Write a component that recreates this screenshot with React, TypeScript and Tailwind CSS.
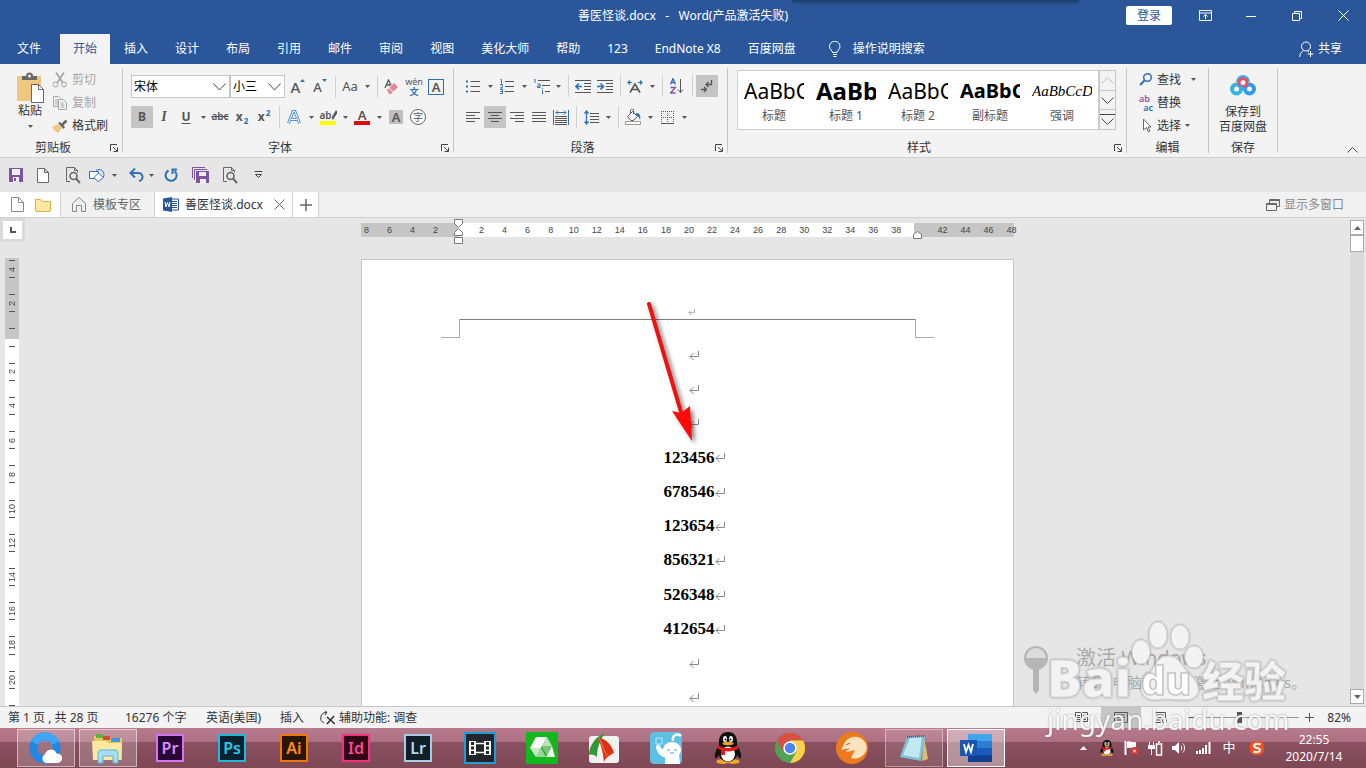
import type { ReactNode } from 'react';
import { clsx } from 'clsx';

interface IconProps {
  w?: number;
  h?: number;
  box?: string;
  className?: string;
  children: ReactNode;
}

function Icon({ w = 16, h = 16, box, className, children }: IconProps) {
  return (
    <svg
      width={w}
      height={h}
      viewBox={box ?? `0 0 ${w} ${h}`}
      fill="none"
      stroke="currentColor"
      className={clsx('shrink-0', className)}
      aria-hidden="true"
    >
      {children}
    </svg>
  );
}

function Caret() {
  return (
    <Icon w={5} h={3}>
      <path d="M0 0h5L2.5 3z" fill="#555" stroke="none" />
    </Icon>
  );
}

function CaretButton({ label }: { label: string }) {
  return (
    <button type="button" aria-label={label} className="flex h-[22px] w-3 items-center justify-center">
      <Caret />
    </button>
  );
}

interface ToolButtonProps {
  label: string;
  active?: boolean;
  children: ReactNode;
}

function ToolButton({ label, active, children }: ToolButtonProps) {
  return (
    <button
      type="button"
      aria-label={label}
      className={clsx('flex h-[22px] w-[22px] shrink-0 items-center justify-center text-[#555]', active && 'bg-[#c5c5c5]')}
    >
      {children}
    </button>
  );
}

function Separator() {
  return (
    <div className="flex h-[22px] w-2 justify-center">
      <div className="w-px bg-[#d0d0d0]" />
    </div>
  );
}

interface GroupProps {
  label: string;
  width: string;
  launcher?: boolean;
  children: ReactNode;
}

function Group({ label, width, launcher, children }: GroupProps) {
  return (
    <section className={clsx('my-1 flex shrink-0 flex-col border-r border-[#c6c6c6]', width)}>
      <div className="min-h-0 flex-1">{children}</div>
      <div className="flex h-2.5 items-center px-1">
        <span className="flex-1 text-center">{label}</span>
        {launcher && (
          <button type="button" aria-label={`${label}设置`} className="ml-2">
            <Icon w={8} h={8} className="text-[#444]">
              <path d="M.5 7V.5H7M3 3l4 4M7.500 3.500v4h-4" />
            </Icon>
          </button>
        )}
      </div>
    </section>
  );
}

function TitleBar() {
  return (
    <header className="relative grid h-[31px] shrink-0 grid-cols-[1fr_auto_1fr] items-center text-white">
      <div className="absolute top-0 left-[58%] h-0.5 w-[21%] rounded-b bg-[#1f3f70] shadow-[0_1px_3px_#1f3f70]" />
      <span />
      <h1 className="whitespace-pre">{'善医怪谈.docx   -   Word(产品激活失败)'}</h1>
      <div className="flex items-center justify-end">
        <button type="button" className="mr-2.5 h-[19px] w-[46px] rounded-xs bg-white text-[#2b579a]">登录</button>
        <button type="button" aria-label="功能区显示选项" className="flex w-[46px] justify-center">
          <Icon w={13} h={11}>
            <path d="M.5 .5h12v10H.5zM.5 3h12M6.500 9V4.500M4.500 6.500l2-2 2 2" />
          </Icon>
        </button>
        <button type="button" aria-label="最小化" className="flex w-[46px] justify-center">
          <Icon w={10} h={10}>
            <path d="M0 5.500h10" />
          </Icon>
        </button>
        <button type="button" aria-label="还原" className="flex w-[46px] justify-center">
          <Icon w={10} h={10}>
            <path d="M.5 2.500h7v7h-7zM2.500 2.500v-2h7v7h-2" />
          </Icon>
        </button>
        <button type="button" aria-label="关闭" className="flex w-[46px] justify-center">
          <Icon w={11} h={11}>
            <path d="M.5 .5l10 10M10.500 .5l-10 10" />
          </Icon>
        </button>
      </div>
    </header>
  );
}

const ribbonTabs = ['开始', '插入', '设计', '布局', '引用', '邮件', '审阅', '视图', '美化大师', '帮助', '123', 'EndNote X8', '百度网盘'];

function RibbonTabs() {
  return (
    <nav className="flex h-[33px] shrink-0 items-end pl-1 text-white">
      <button type="button" className="mr-1.5 h-[30px] px-[13px]">文件</button>
      <div className="flex gap-px">
        {ribbonTabs.map((tab, i) => (
          <button key={tab} type="button" className={clsx('h-[30px] px-[13px]', i === 0 && 'bg-[#f3f3f3] text-[#2b579a]')}>
            {tab}
          </button>
        ))}
      </div>
      <button type="button" className="ml-5 flex h-[30px] items-center gap-3">
        <Icon w={12} h={16}>
          <path d="M3.500 11.500c0-2-3-3-3-6a5 5 0 0 1 10.500 0c0 3-3 4-3 6zM4 13.500h4M4.500 15.500h3" />
        </Icon>
        操作说明搜索
      </button>
      <button type="button" className="mr-6 ml-auto flex h-[30px] items-center gap-1">
        <Icon w={15} h={17}>
          <circle cx="7" cy="5.500" r="4.500" />
          <path d="M4.500 9.500C2 11 1 13 .5 16M8.500 10l1.500 1M11.500 10v6M8.500 13h6" />
        </Icon>
        共享
      </button>
    </nav>
  );
}

function ClipboardGroup() {
  return (
    <Group label="剪贴板" width="w-[123px]" launcher>
      <div className="flex gap-2 pl-4">
        <button type="button" className="flex w-[28px] flex-col items-center pt-1">
          <Icon w={28} h={31}>
            <path d="M1 4h24v25H1z" fill="#edc87e" stroke="none" />
            <path d="M6 8V4h4a3.500 3.500 0 0 1 7 0h4v4z" fill="#6a6a6a" stroke="none" />
            <circle cx="13.500" cy="4" r="1.500" fill="#f3f3f3" stroke="none" />
            <path d="M15.500 12.500h7l5 5v13h-12z" fill="#fff" stroke="#666" />
            <path d="M22.500 12.500v5h5" stroke="#666" />
          </Icon>
          <span className="leading-4 whitespace-nowrap">粘贴</span>
          <span className="mt-1.5">
            <Caret />
          </span>
        </button>
        <div className="flex flex-col text-[#a6a6a6]">
          <button type="button" className="flex h-[23px] items-center gap-1">
            <Icon w={16} h={16}>
              <path d="M4 .5l7 10.500M12 .5L5 11" strokeWidth="1.800" />
              <circle cx="3.500" cy="12.500" r="2.500" />
              <circle cx="12" cy="12.500" r="2.500" />
            </Icon>
            剪切
          </button>
          <button type="button" className="flex h-[23px] items-center gap-1">
            <Icon w={16} h={14}>
              <path d="M6 10.500H1.500V.5h5l2 2v1M3 4h3M3 6h3M3 8h3" />
              <path d="M6.500 3.500h5l3 3v7h-8zM8.500 7h3M8.500 9h4M8.500 11h4" />
            </Icon>
            复制
          </button>
          <button type="button" className="flex h-[23px] items-center gap-1 text-[#333]">
            <Icon w={16} h={14}>
              <path d="M0 8l6-3 4 4-4 5c-2-1-4-3-6-6z" fill="#edc87e" stroke="none" />
              <path d="M6 4l2-1 5 5-1.500 2z" fill="#666" stroke="none" />
              <path d="M10 6l4.500-4.500" stroke="#666" strokeWidth="2.500" />
            </Icon>
            格式刷
          </button>
        </div>
      </div>
    </Group>
  );
}

interface PickerProps {
  label: string;
  value: string;
  width: string;
}

function Picker({ label, value, width }: PickerProps) {
  return (
    <div className={clsx('relative', width)}>
      <select aria-label={label} className="h-[23px] w-full appearance-none border border-[#c6c6c6] bg-white pl-0.5 text-xs text-black">
        <option>{value}</option>
      </select>
      <Icon w={13} h={8} className="pointer-events-none absolute top-2 right-1 text-[#444]">
        <path d="M.5 .5l6 6.500 6-6.500" />
      </Icon>
    </div>
  );
}

function FontGroup() {
  return (
    <Group label="字体" width="w-[331px]" launcher>
      <div className="flex flex-col gap-2 pt-[7px] pl-2">
        <div className="flex h-[23px] items-center">
          <Picker label="字体" value="宋体" width="w-[99px]" />
          <Picker label="字号" value="小三" width="w-[55px]" />
          <div className="ml-0.5 flex">
            <ToolButton label="增大字号">
              <span className="text-[15px] leading-4 font-medium">A</span>
              <Icon w={5} h={3} className="mb-3">
                <path d="M0 3h5L2.500 0z" fill="#2f6fb5" stroke="none" />
              </Icon>
            </ToolButton>
            <ToolButton label="减小字号">
              <span className="text-[13px] leading-4 font-medium">A</span>
              <Icon w={5} h={3} className="mb-3">
                <path d="M0 0h5L2.500 3z" fill="#2f6fb5" stroke="none" />
              </Icon>
            </ToolButton>
            <Separator />
            <ToolButton label="更改大小写">
              <span className="text-[13px]">Aa</span>
            </ToolButton>
            <CaretButton label="大小写选项" />
            <Separator />
            <ToolButton label="清除所有格式">
              <Icon w={16} h={16}>
                <path d="M1 9L4.500 1 7 6M2.500 6h4" strokeWidth="1.300" />
                <path d="M3 11l7-7 4 4-7 7H5z" fill="#e8879a" stroke="none" />
                <path d="M5 9l4 4" stroke="#fff" />
              </Icon>
            </ToolButton>
            <ToolButton label="拼音指南">
              <span className="flex flex-col items-center">
                <span className="text-[9px] leading-[10px]">wén</span>
                <span className="text-[9px] leading-[10px] font-bold text-[#2f6fb5]">文</span>
              </span>
            </ToolButton>
            <ToolButton label="字符边框">
              <span className="h-4 w-4 border border-[#2f6fb5] text-[13px] leading-[14px] font-semibold">A</span>
            </ToolButton>
          </div>
        </div>
        <div className="flex">
          <ToolButton label="加粗" active>
            <b>B</b>
          </ToolButton>
          <ToolButton label="倾斜">
            <i className="font-['Liberation_Serif',serif] text-sm font-bold">I</i>
          </ToolButton>
          <ToolButton label="下划线">
            <span className="font-bold underline underline-offset-2">U</span>
          </ToolButton>
          <CaretButton label="下划线选项" />
          <ToolButton label="删除线">
            <span className="text-[10px] font-semibold line-through">abc</span>
          </ToolButton>
          <ToolButton label="下标">
            <b>x</b>
            <span className="mt-2 ml-px text-[8px] font-bold text-[#2f6fb5]">2</span>
          </ToolButton>
          <ToolButton label="上标">
            <b>x</b>
            <span className="mb-2 ml-px text-[8px] font-bold text-[#2f6fb5]">2</span>
          </ToolButton>
          <Separator />
          <ToolButton label="文本效果和版式">
            <Icon w={14} h={15}>
              <path d="M1.500 13.500L6 1.500h2l4.500 12M4 9.500h6" stroke="#5b94d6" strokeWidth="3" />
              <path d="M1.500 13.500L6 1.500h2l4.500 12M4 9.500h6" stroke="#fff" />
            </Icon>
          </ToolButton>
          <CaretButton label="文本效果选项" />
          <ToolButton label="文本突出显示颜色">
            <span className="flex flex-col items-center">
              <span className="flex items-center">
                <span className="text-[10px] leading-[11px] font-semibold">ab</span>
                <Icon w={5} h={11}>
                  <path d="M5 1L0 9" strokeWidth="2.500" />
                </Icon>
              </span>
              <span className="h-1 w-4 bg-[#ffff00]" />
            </span>
          </ToolButton>
          <CaretButton label="突出显示选项" />
          <ToolButton label="字体颜色">
            <span className="flex flex-col items-center">
              <span className="text-[13px] leading-3 font-semibold">A</span>
              <span className="h-1 w-4 bg-[#e00b0b]" />
            </span>
          </ToolButton>
          <CaretButton label="字体颜色选项" />
          <ToolButton label="字符底纹">
            <span className="h-3.5 w-3.5 bg-[#c0c0c0] text-[13px] leading-[14px] font-semibold">A</span>
          </ToolButton>
          <ToolButton label="带圈字符">
            <span className="h-4 w-4 rounded-full border border-[#666] bg-white text-[10px] leading-[14px]">字</span>
          </ToolButton>
        </div>
      </div>
    </Group>
  );
}

function ParagraphGroup() {
  return (
    <Group label="段落" width="w-[274px]" launcher>
      <div className="flex flex-col gap-[9px] pt-[7px] pl-2">
        <div className="flex">
          <ToolButton label="项目符号">
            <Icon w={14} h={15}>
              <path d="M4.500 2.500H14M4.500 7.500H14M4.500 12.500H14" />
              <path d="M0 2.500h2M0 7.500h2M0 12.500h2" stroke="#2f6fb5" strokeWidth="2" />
            </Icon>
          </ToolButton>
          <CaretButton label="项目符号选项" />
          <ToolButton label="编号">
            <Icon w={14} h={15}>
              <path d="M5 2.500h9M5 7.500h9M5 12.500h9" />
              <path d="M.5 .5h1v4M0 5.500h2.500v1.500l-2 2h2.500M0 10.500h2.500v4H0M.5 12.500h2" stroke="#2f6fb5" />
            </Icon>
          </ToolButton>
          <CaretButton label="编号选项" />
          <ToolButton label="多级列表">
            <Icon w={17} h={15}>
              <path d="M5 1.500h12M9 6.500h8M12 12.500h5" />
              <path d="M1 0h1v4M4.500 5h2.500v3.500H4.500V7H7M9.500 11v4M9.500 9v1" stroke="#2f6fb5" />
            </Icon>
          </ToolButton>
          <CaretButton label="多级列表选项" />
          <Separator />
          <ToolButton label="减少缩进量">
            <Icon w={16} h={13}>
              <path d="M0 .5h16M9 3.500h7M9 6.500h7M9 9.500h7M0 12.500h16" />
              <path d="M7 6.500H1.500M4 3.500l-3 3 3 3" stroke="#2f6fb5" strokeWidth="1.600" />
            </Icon>
          </ToolButton>
          <ToolButton label="增加缩进量">
            <Icon w={16} h={13}>
              <path d="M0 .5h16M9 3.500h7M9 6.500h7M9 9.500h7M0 12.500h16" />
              <path d="M0 6.500h6M3.500 3.500l3 3-3 3" stroke="#2f6fb5" strokeWidth="1.600" />
            </Icon>
          </ToolButton>
          <Separator />
          <ToolButton label="中文版式">
            <Icon w={16} h={13}>
              <path d="M3 12.500L8 4l5 8.500M5 9.500h6" strokeWidth="1.600" />
              <path d="M5 2.500H.5M3 .5l-2 2 2 2M11 2.500h4.500M13 .5l2 2-2 2" stroke="#2f6fb5" strokeWidth="1.200" />
            </Icon>
          </ToolButton>
          <CaretButton label="中文版式选项" />
          <Separator />
          <ToolButton label="排序">
            <Icon w={14} h={16}>
              <path d="M.5 6.500L3 .5l2.500 6M1.500 4.500h3" stroke="#2f6fb5" strokeWidth="1.300" />
              <path d="M.5 9.500h5l-5 5.500h5" stroke="#8a52a0" strokeWidth="1.300" />
              <path d="M10.500 1v13M8 11.500l2.500 3 2.500-3" />
            </Icon>
          </ToolButton>
          <Separator />
          <ToolButton label="显示编辑标记" active>
            <Icon w={12} h={13}>
              <path d="M10.500 0v4.500H5M7.500 2L5 4.500 7.500 7M0 9.500h5M3 7l2.500 2.500L3 12" strokeWidth="1.300" />
            </Icon>
          </ToolButton>
        </div>
        <div className="flex">
          <ToolButton label="左对齐">
            <Icon w={14} h={11}>
              <path d="M0 .5h14M0 3.500h9M0 6.500h14M0 9.500h9" />
            </Icon>
          </ToolButton>
          <ToolButton label="居中" active>
            <Icon w={14} h={11}>
              <path d="M0 .5h14M3 3.500h8M0 6.500h14M3 9.500h8" />
            </Icon>
          </ToolButton>
          <ToolButton label="右对齐">
            <Icon w={14} h={11}>
              <path d="M0 .5h14M5 3.500h9M0 6.500h14M5 9.500h9" />
            </Icon>
          </ToolButton>
          <ToolButton label="两端对齐">
            <Icon w={14} h={11}>
              <path d="M0 .5h14M0 3.500h14M0 6.500h14M0 9.500h14" />
            </Icon>
          </ToolButton>
          <ToolButton label="分散对齐">
            <Icon w={16} h={15}>
              <path d="M2 6.500h12M2 8.500h12M2 10.500h12M2 12.500h12M2 14.500h12" />
              <path d="M.5 0v15M15.500 0v15M3 2.500h10M5 .5l-2 2 2 2M11 .5l2 2-2 2" stroke="#2f6fb5" />
            </Icon>
          </ToolButton>
          <Separator />
          <ToolButton label="行和段落间距">
            <Icon w={15} h={15}>
              <path d="M6 3.500h9M6 6.500h9M6 9.500h9M6 12.500h9" />
              <path d="M2.500 1v13M.5 3.500l2-2.500 2 2.500M.5 11.500l2 2.500 2-2.500" stroke="#2f6fb5" strokeWidth="1.300" />
            </Icon>
          </ToolButton>
          <CaretButton label="间距选项" />
          <Separator />
          <ToolButton label="底纹">
            <Icon w={17} h={16}>
              <path d="M2.500 7.500l5-5 5 5-4.500 4H6zM5.500 5V1.500a1.500 1.500 0 0 1 3 0V5" fill="#fff" />
              <path d="M11 4c4 0 5 3 4 7-1-3-2-4-4-5z" fill="#2f6fb5" stroke="none" />
              <path d="M.5 12.500h15v3H.5z" fill="#fff" stroke="#999" />
            </Icon>
          </ToolButton>
          <CaretButton label="底纹选项" />
          <ToolButton label="边框">
            <Icon w={13} h={13}>
              <path d="M.5 0v12M6.500 0v12M12.500 0v12M0 .5h13M0 6.500h13" strokeDasharray="1 1" />
              <path d="M0 12.500h13" />
            </Icon>
          </ToolButton>
          <CaretButton label="边框选项" />
        </div>
      </div>
    </Group>
  );
}

const styleItems = [
  { name: '标题', sample: 'AaBbC', look: 'text-[21px]' },
  { name: '标题 1', sample: 'AaBb', look: 'text-2xl font-bold' },
  { name: '标题 2', sample: 'AaBbC', look: 'text-[21px]' },
  { name: '副标题', sample: 'AaBbC', look: 'text-xl font-bold' },
  { name: '强调', sample: 'AaBbCcDd', look: "text-[15px] italic font-['Liberation_Serif',serif]" },
];

function StylesGroup() {
  return (
    <Group label="样式" width="w-[399px]" launcher>
      <div className="flex pt-0.5 pl-[9px]">
        <div className="flex h-[60px] border border-[#d0d0d0] bg-white">
          {styleItems.map(item => (
            <button key={item.name} type="button" className="flex w-[72px] flex-col items-center pt-1.5">
              <span className={clsx('h-[31px] w-[60px] overflow-hidden text-left leading-7 whitespace-nowrap text-black', item.look)}>
                {item.sample}
              </span>
              <span className="leading-4 text-[#555]">{item.name}</span>
            </button>
          ))}
        </div>
        <div className="flex h-[60px] w-[17px] flex-col border border-[#c6c6c6] text-[#444]">
          <button type="button" aria-label="上一行" className="flex flex-1 items-center justify-center border-b border-[#c6c6c6] text-[#bbb]">
            <Icon w={13} h={7}>
              <path d="M.5 6.500l6-6 6 6" />
            </Icon>
          </button>
          <button type="button" aria-label="下一行" className="flex flex-1 items-center justify-center border-b border-[#c6c6c6]">
            <Icon w={13} h={7}>
              <path d="M.5 .5l6 6 6-6" />
            </Icon>
          </button>
          <button type="button" aria-label="其他样式" className="flex flex-1 items-center justify-center">
            <Icon w={15} h={12}>
              <path d="M0 .5h15M1.500 4.500l6 6 6-6" />
            </Icon>
          </button>
        </div>
      </div>
    </Group>
  );
}

function EditingGroup() {
  return (
    <Group label="编辑" width="w-[82px]">
      <div className="flex flex-col items-start pl-3">
        <button type="button" className="flex h-[23px] items-center gap-1">
          <Icon w={14} h={13}>
            <circle cx="8.500" cy="4.500" r="3.800" stroke="#2f6fb5" strokeWidth="1.500" />
            <path d="M5.500 7.500L1 12" stroke="#2f6fb5" strokeWidth="2" />
          </Icon>
          查找
          <span className="ml-1.5">
            <Caret />
          </span>
        </button>
        <button type="button" className="flex h-[23px] items-center gap-1">
          <span className="flex w-3.5 flex-col text-[9px] leading-[9px] font-semibold">
            <span className="text-left text-[#8a52a0]">ab</span>
            <span className="text-right text-[#2f6fb5]">ac</span>
          </span>
          替换
        </button>
        <button type="button" className="flex h-[23px] items-center gap-1">
          <Icon w={14} h={15}>
            <path d="M4.500 1v11l3-2.500 2 4.500 1.500-1-2-4h3z" stroke="#666" fill="#fff" />
          </Icon>
          选择
          <Caret />
        </button>
      </div>
    </Group>
  );
}

function Ribbon() {
  return (
    <div className="flex h-[94px] shrink-0 border-b border-[#d0d0d0] bg-[#f3f3f3]">
      <ClipboardGroup />
      <FontGroup />
      <ParagraphGroup />
      <StylesGroup />
      <EditingGroup />
      <Group label="保存" width="w-[69px]">
        <button type="button" className="flex w-full flex-col items-center pt-1.5">
          <Icon w={26} h={22}>
            <circle cx="6.500" cy="15" r="4.500" stroke="#35b4e4" strokeWidth="4" />
            <circle cx="19.500" cy="15" r="4.500" stroke="#2f9be8" strokeWidth="4" />
            <path d="M8 8a5 5 0 0 1 10 0" stroke="#38b6e8" strokeWidth="4" />
            <circle cx="13" cy="8.500" r="4" stroke="#e8506a" strokeWidth="3" />
            <path d="M9.500 11.500l6 5.500" stroke="#35a8e8" strokeWidth="3" />
          </Icon>
          <span className="mt-2 leading-[15px]">保存到</span>
          <span className="leading-[15px]">百度网盘</span>
        </button>
      </Group>
      <button type="button" aria-label="折叠功能区" className="mt-auto mr-2 mb-1 ml-auto">
        <Icon w={11} h={6} className="text-[#444]">
          <path d="M.5 5.500l5-5 5 5" />
        </Icon>
      </button>
    </div>
  );
}

function PreviewIcon() {
  return (
    <Icon w={15} h={17} className="text-[#666]">
      <path d="M4 14.500H.5V.5h8l3 3v2M8.500 .5v3h3" />
      <circle cx="7.500" cy="9" r="3.500" strokeWidth="1.600" />
      <path d="M10 11.500l4 4.500" strokeWidth="2" />
    </Icon>
  );
}

function QuickAccess() {
  return (
    <div className="flex h-[34px] shrink-0 items-center bg-[#e6e6e6] pl-[9px]">
      <button type="button" aria-label="保存" className="mr-[14px]">
        <Icon w={14} h={14}>
          <path d="M0 0h14v14H0z" fill="#7d54a0" stroke="none" />
          <path d="M3 1h8v6H3zM4 9h6v5H4z" fill="#eee" stroke="none" />
          <path d="M5 10h2v3H5z" fill="#7d54a0" stroke="none" />
        </Icon>
      </button>
      <button type="button" aria-label="新建" className="mr-[17px]">
        <Icon w={12} h={15} className="text-[#666]">
          <path d="M.5 .5h7l4 4v10H.5zM7.500 .5v4h4" fill="#fff" />
        </Icon>
      </button>
      <button type="button" aria-label="打印预览" className="mr-2">
        <PreviewIcon />
      </button>
      <button type="button" aria-label="形状" className="flex items-center gap-1.5">
        <Icon w={17} h={15} className="text-[#2f6fb5]">
          <path d="M7 2.500a5 5 0 1 1 6 8" />
          <path d="M.5 3.500h9v7h-9z" fill="#fff" />
          <path d="M9.500 5l4.500 4.500-4.500 4.500L5 9.500z" fill="#fff" />
        </Icon>
        <Caret />
      </button>
      <button type="button" aria-label="撤消" className="ml-3 flex items-center gap-1">
        <Icon w={16} h={14} className="text-[#2f6fb5]">
          <path d="M1.500 5H9a4 4 0 0 1 1 8M6 .5L1.500 5 6 9.500" strokeWidth="2" />
        </Icon>
        <Caret />
      </button>
      <button type="button" aria-label="重复" className="ml-2.5">
        <Icon w={14} h={14} className="text-[#2f6fb5]">
          <path d="M4.500 2.500a5.500 5.500 0 1 0 6 .5M13 1.500H8.500V6" strokeWidth="2" />
        </Icon>
      </button>
      <button type="button" aria-label="全部保存" className="ml-[14px]">
        <Icon w={17} h={16}>
          <path d="M.5 11V.5H13M2.500 13V2.500H15" stroke="#7d54a0" />
          <path d="M4 4h13v12H4z" fill="#7d54a0" stroke="none" />
          <path d="M7 5h7v4H7zM8 12h6v4H8z" fill="#eee" stroke="none" />
        </Icon>
      </button>
      <button type="button" aria-label="预览" className="ml-[14px]">
        <PreviewIcon />
      </button>
      <button type="button" aria-label="自定义快速访问工具栏" className="ml-4">
        <Icon w={9} h={8} className="text-[#444]">
          <path d="M.5 .5h8M1.500 3.500h6l-3 3z" />
        </Icon>
      </button>
    </div>
  );
}

function DocumentTabs() {
  return (
    <div className="flex h-[26px] shrink-0 items-stretch border-b border-[#d0d0d0] bg-[#f1f1f1] text-[#666]">
      <div className="flex w-[61px] items-center gap-[11px] border-r border-[#d0d0d0] bg-white pl-[11px] text-[#888]">
        <button type="button" aria-label="新建文档">
          <Icon w={13} h={15}>
            <path d="M.5 .5h7l5 5v9H.5zM7.500 .5v5h5" />
          </Icon>
        </button>
        <button type="button" aria-label="打开文件夹">
          <Icon w={16} h={14}>
            <path d="M.5 12V1.500h5l2 2h8V12a1.500 1.500 0 0 1-1.500 1.500H2A1.500 1.500 0 0 1 .5 12z" fill="#fdeaa0" stroke="#d9ae4a" />
          </Icon>
        </button>
      </div>
      <button type="button" className="flex w-[94px] items-center gap-[7px] border-r border-[#d0d0d0] pl-[11px]">
        <Icon w={14} h={15} className="text-[#888]">
          <path d="M.5 6.500l6.500-6 6.500 6v8h-4v-6h-5v6h-4z" />
        </Icon>
        模板专区
      </button>
      <div className="flex w-[138px] items-center border-r border-[#d0d0d0] bg-white pl-2">
        <Icon w={16} h={15}>
          <path d="M8 2h7.500v11H8z" fill="#fff" stroke="#2b579a" />
          <path d="M9 4.500h5M9 6.500h5M9 8.500h5M9 10.500h5" stroke="#2b579a" />
          <path d="M0 1.500L9 0v15l-9-1.500z" fill="#2b579a" stroke="none" />
          <path d="M2 5l1 5 1.500-4.500L6 10l1-5" stroke="#fff" />
        </Icon>
        <span className="ml-1.5 text-[#333]">善医怪谈.docx</span>
        <button type="button" aria-label="关闭文档" className="mr-[7px] ml-auto">
          <Icon w={11} h={11}>
            <path d="M.5 .5l10 10M10.500 .5l-10 10" />
          </Icon>
        </button>
      </div>
      <button type="button" aria-label="添加标签" className="flex w-[26px] items-center justify-center border-r border-[#d0d0d0] bg-white">
        <Icon w={12} h={12}>
          <path d="M6 0v12M0 6h12" strokeWidth="1.500" />
        </Icon>
      </button>
      <button type="button" className="mr-[22px] ml-auto flex items-center gap-1 text-[#888]">
        <Icon w={14} h={12} className="text-[#666]">
          <path d="M.5 4.500h10v7H.5zM.5 5.500h10M3.500 4V.5h10v7h-3M3.500 1.500h10" />
        </Icon>
        显示多窗口
      </button>
    </div>
  );
}

const verticalMarks = ['4', '2', '', '2', '4', '6', '8', '10', '12', '14', '16', '18', '20', ''];

function VerticalRuler() {
  return (
    <div className="mt-4 ml-[5px] min-h-0 w-3.5 flex-1 overflow-hidden bg-[linear-gradient(#c6c6c6_81px,#fff_81px)]">
      <div className="-mt-1.5 grid h-[479px] auto-rows-fr">
        {verticalMarks.map((mark, i) => (
          <div key={i} className="flex flex-col items-center justify-between py-2">
            <span className="h-px w-1.5 bg-[#555]" />
            <span className="rotate-180 font-['Liberation_Sans',sans-serif] text-[9px] leading-[9px] text-[#444] [writing-mode:vertical-rl]">
              {mark}
            </span>
            <span className="h-px w-1.5 bg-[#555]" />
          </div>
        ))}
      </div>
    </div>
  );
}

const beforeMargin = ['8', '6', '4', '2'];
const textArea = Array.from({ length: 19 }, (_, i) => String((i + 1) * 2));
const afterMargin = ['42', '44', '46', '48'];

function HorizontalRuler() {
  return (
    <div className="relative flex h-3.5 w-[653px] font-['Liberation_Sans',sans-serif] text-[9px] leading-[14px] text-[#444]">
      <div className="flex w-[97px] justify-between bg-[#c6c6c6] pr-5 pl-[3px]">
        {beforeMargin.map(n => <span key={n}>{n}</span>)}
      </div>
      <div className="flex flex-1 bg-white pr-1.5 pl-3">
        {textArea.map(n => <span key={n} className="flex-1 text-center">{n}</span>)}
      </div>
      <div className="flex w-[100px] bg-[#c6c6c6] pl-[17px]">
        {afterMargin.map(n => <span key={n} className="w-[23px] shrink-0 text-center">{n}</span>)}
      </div>
      <Icon w={9} h={26} className="absolute -top-1 left-[93px] text-[#777]">
        <path d="M.5 .5h8v4l-4 4-4-4zM.5 16.500v-3l4-4 4 4v3zM.5 18.500h8v6h-8z" fill="#fff" />
      </Icon>
      <Icon w={9} h={9} className="absolute top-2 left-[552px] text-[#777]">
        <path d="M.5 7.500v-4l4-3 4 3v4z" fill="#fff" />
      </Icon>
    </div>
  );
}

function ReturnMark({ small }: { small?: boolean }) {
  return (
    <span className="w-0 overflow-visible">
      <Icon w={small ? 7 : 10} h={small ? 6 : 9} box="0 0 10 9" className="text-[#888]">
        <path d="M9.500 0v5.500H1M4.500 2L1 5.500 4.500 9" />
      </Icon>
    </span>
  );
}

const paragraphs = ['', '', '', '123456', '678546', '123654', '856321', '526348', '412654', '', ''];

function Page() {
  return (
    <article className="relative mt-[22px] flex min-h-[900px] w-[653px] flex-col border border-[#c6c6c6] bg-white">
      <div className="flex h-[59px] items-end justify-center pb-1">
        <ReturnMark small />
      </div>
      <div className="flex h-[19px] px-[79px]">
        <span className="w-[19px] border-r border-b border-[#aaa]" />
        <span className="flex-1 border-t border-[#808080]" />
        <span className="w-[19px] border-b border-l border-[#aaa]" />
      </div>
      <div className="grid h-[377px] auto-rows-fr pl-[3px] font-['Liberation_Serif',serif] text-[17px] font-bold text-black">
        {paragraphs.map((text, i) => (
          <p key={i} className="flex items-center justify-center">
            {text}
            <ReturnMark />
          </p>
        ))}
      </div>
      <Icon w={64} h={150} className="absolute top-[38px] left-[280px] drop-shadow-[3px_3px_2px_rgba(0,0,0,0.5)]">
        <path d="M7 6l32 108" stroke="#ee1111" strokeWidth="4" strokeLinecap="round" />
        <path d="M50 143L30 113l9 2 9-7z" fill="#ff0a0a" stroke="none" />
      </Icon>
    </article>
  );
}

function ScrollBar() {
  return (
    <div className="my-0.5 mr-0.5 flex w-3.5 shrink-0 flex-col bg-[#dadada]">
      <button type="button" aria-label="向上滚动" className="flex h-[15px] items-center justify-center border border-[#ababab] bg-white">
        <Icon w={7} h={4}>
          <path d="M0 4h7L3.500 0z" fill="#666" stroke="none" />
        </Icon>
      </button>
      <div className="h-[17px] border border-[#ababab] bg-white" />
      <button type="button" aria-label="向下滚动" className="mt-auto flex h-[15px] items-center justify-center border border-[#ababab] bg-white">
        <Icon w={7} h={4}>
          <path d="M0 0h7L3.500 4z" fill="#666" stroke="none" />
        </Icon>
      </button>
    </div>
  );
}

function Workspace() {
  return (
    <main className="relative flex min-h-0 flex-1 overflow-hidden bg-[#e6e6e6]">
      <div className="flex w-[25px] shrink-0 flex-col">
        <button type="button" aria-label="制表符" className="flex h-6 items-center justify-center border-[3px] border-[#dadada] bg-white">
          <Icon w={6} h={6} className="text-[#555]">
            <path d="M1 0v5h5" strokeWidth="2" />
          </Icon>
        </button>
        <VerticalRuler />
      </div>
      <div className="flex flex-1 flex-col items-center overflow-hidden pt-[5px]">
        <HorizontalRuler />
        <Page />
      </div>
      <ScrollBar />
    </main>
  );
}

function StatusBar() {
  return (
    <footer className="flex h-[22px] shrink-0 items-center border-t border-[#c6c6c6] bg-[#f3f3f3] pl-2">
      <span className="w-[117px]">第 1 页 , 共 28 页</span>
      <span className="w-[81px]">16276 个字</span>
      <span className="w-[74px]">英语(美国)</span>
      <span className="w-10">插入</span>
      <span className="flex items-center gap-1">
        <Icon w={15} h={14}>
          <path d="M6 1.500A5.500 5.500 0 0 0 4 12M5 0l2 1.500L5 4" />
          <path d="M7 6l8 7M14 5l-7 8" strokeWidth="1.600" />
        </Icon>
        辅助功能: 调查
      </span>
      <div className="mr-[15px] ml-auto flex h-full items-center text-[#555]">
        <button type="button" aria-label="阅读视图" className="flex h-full w-10 items-center justify-center">
          <Icon w={13} h={11}>
            <path d="M.5 .5h5l1 1 1-1h5v9h-5l-1 1-1-1h-5zM6.500 1v9M2 3.500h3M2 5.500h3M2 7.500h3M8 3.500h3M8 5.500h3M8 7.500h3" />
          </Icon>
        </button>
        <button type="button" aria-label="页面视图" className="flex h-full w-10 items-center justify-center bg-[#c6c6c6]">
          <Icon w={14} h={11}>
            <path d="M.5 .5h13v10H.5zM3 3h8M3 5.500h8M3 8h8" />
          </Icon>
        </button>
        <button type="button" aria-label="Web 版式视图" className="flex h-full w-10 items-center justify-center">
          <Icon w={14} h={12}>
            <path d="M7 10.500H.5V.5h11V6M2.500 3h7M2.500 5.500h5M2.500 8h4" />
            <circle cx="10.500" cy="9" r="2" />
          </Icon>
        </button>
        <button type="button" aria-label="缩小" className="flex w-5 justify-center">
          <Icon w={9} h={9}>
            <path d="M0 4.500h9" />
          </Icon>
        </button>
        <input
          type="range"
          aria-label="缩放"
          min={0}
          max={100}
          defaultValue={38}
          className="h-3 w-[98px] appearance-none bg-[linear-gradient(#999,#999)] bg-[length:100%_1px] bg-center bg-no-repeat [&::-webkit-slider-thumb]:h-[11px] [&::-webkit-slider-thumb]:w-[5px] [&::-webkit-slider-thumb]:appearance-none [&::-webkit-slider-thumb]:bg-[#555]"
        />
        <button type="button" aria-label="放大" className="flex w-5 justify-center">
          <Icon w={9} h={9}>
            <path d="M0 4.500h9M4.500 0v9" />
          </Icon>
        </button>
        <span className="ml-2 text-[#333]">82%</span>
      </div>
    </footer>
  );
}

function AdobeTile({ text, look }: { text: string; look: string }) {
  return <span className={clsx('flex h-7 w-7 items-center justify-center border-2 text-base leading-6 font-semibold', look)}>{text}</span>;
}

function Penguin({ size }: { size: number }) {
  return (
    <Icon w={size} h={size} box="0 0 32 32">
      <ellipse cx="10.500" cy="29.500" rx="6" ry="2.500" fill="#f5a623" stroke="none" />
      <ellipse cx="21.500" cy="29.500" rx="6" ry="2.500" fill="#f5a623" stroke="none" />
      <path d="M16 0C9.500 0 7 4.500 7 10v3c-2 4-5 8-4 13 2 1 3-2 4-3 2 9 16 9 18 0 1 1 2 4 4 3 1-5-2-9-4-13v-3c0-5.500-2.500-10-9-10z" fill="#111" stroke="none" />
      <ellipse cx="16" cy="22" rx="7" ry="7.500" fill="#fff" stroke="none" />
      <ellipse cx="13" cy="7" rx="2" ry="3" fill="#fff" stroke="none" />
      <ellipse cx="19" cy="7" rx="2" ry="3" fill="#fff" stroke="none" />
      <circle cx="13.500" cy="7.500" r="1" fill="#111" stroke="none" />
      <circle cx="18.500" cy="7.500" r="1" fill="#111" stroke="none" />
      <ellipse cx="16" cy="11.500" rx="5.500" ry="1.700" fill="#f5a623" stroke="none" />
      <path d="M6 13c5 4 15 4 20 0v4c-4 2-8 3-13 2v4H9v-5l-3-1z" fill="#e21b1b" stroke="none" />
    </Icon>
  );
}

interface TaskItem {
  name: string;
  frame?: string;
  art: ReactNode;
}

const taskItems: TaskItem[] = [
  {
    name: 'QQ浏览器',
    frame: 'border-white/50 bg-white/20',
    art: (
      <Icon w={34} h={34}>
        <circle cx="16" cy="17" r="11.500" stroke="#2186e6" strokeWidth="8" />
        <path d="M5.500 12a11.500 11.500 0 0 1 21 0" stroke="#3fa6f5" strokeWidth="8" />
        <path d="M17 32a4.500 4.500 0 0 1-1-8.500 6 6 0 0 1 11.500-1A4.800 4.800 0 0 1 29 32z" fill="#fff" stroke="none" />
      </Icon>
    ),
  },
  {
    name: '文件资源管理器',
    frame: 'border-white/50 bg-white/20',
    art: (
      <Icon w={34} h={32}>
        <path d="M3 4h10l2 2h16v22H3z" fill="#e6c75e" stroke="none" />
        <path d="M5 2h7v4H5z" fill="#58b348" stroke="none" />
        <path d="M12 4h7v4h-7z" fill="#d9482f" stroke="none" />
        <path d="M20 6h9v4h-9z" fill="#3c9be0" stroke="none" />
        <path d="M1 9h13l3 2h14l-1 17H2z" fill="#f8eaa0" stroke="none" />
        <path d="M7 31V21c0-2 1-3 3-3h14c2 0 3 1 3 3v10h-5v-7H12v7z" fill="#a6dcf5" stroke="#5fb0dc" />
      </Icon>
    ),
  },
  { name: 'Premiere', art: <AdobeTile text="Pr" look="border-[#d473f5] bg-[#2a0634] text-[#d68cff]" /> },
  { name: 'Photoshop', art: <AdobeTile text="Ps" look="border-[#1fb8dc] bg-[#06222e] text-[#26c9f0]" /> },
  { name: 'Illustrator', art: <AdobeTile text="Ai" look="border-[#f07800] bg-[#2a1500] text-[#ff8a10]" /> },
  { name: 'InDesign', art: <AdobeTile text="Id" look="border-[#f5317f] bg-[#2e0616] text-[#ff4590]" /> },
  { name: 'Lightroom', art: <AdobeTile text="Lr" look="border-[#a9cbe8] bg-[#101e28] text-[#b9d8ee]" /> },
  {
    name: '视频编辑',
    art: (
      <Icon w={32} h={32}>
        <path d="M1 1h30v30H1z" fill="#22262b" stroke="#1ba0d8" strokeWidth="2" />
        <path d="M5 9h7v14H5zM20 9h7v14h-7z" fill="#fff" stroke="none" />
        <path d="M8.500 10v12M23.500 10v12" stroke="#22262b" strokeWidth="3" strokeDasharray="3 1.500" />
        <path d="M11 11.500h10M11 20.500h10" stroke="#fff" strokeWidth="1.500" />
      </Icon>
    ),
  },
  {
    name: '三维建模',
    art: (
      <Icon w={32} h={32}>
        <rect width="32" height="32" rx="1" fill="#12b81c" stroke="none" />
        <path d="M10 5h11l-6 11H4z" fill="#fff" stroke="none" />
        <path d="M4 16h11l-5 9z" fill="#c9e9c9" stroke="none" />
        <path d="M21 5l5 9H16z" fill="#b8e2b8" stroke="none" />
        <path d="M15 14h11l-5 9z" fill="#7fc07f" stroke="none" />
        <path d="M10 25l5-9 5 9z" fill="#9dd49d" stroke="none" />
        <path d="M20 25l6-11 3 11z" fill="#e8f7e8" stroke="none" />
      </Icon>
    ),
  },
  {
    name: '截图工具',
    art: (
      <Icon w={30} h={31}>
        <rect y="3" width="30" height="27" rx="3" fill="#f2f2f2" stroke="none" />
        <path d="M16 0C6 4 0 13 0 22c3-1 6 0 8 2 0-8 2-15 8-24z" fill="#2e9a34" stroke="none" />
        <path d="M8 5c10 0 15 8 17 15-4 2-8 4-10 9-1-8-2-17-7-24z" fill="#e23014" stroke="none" />
        <path d="M10 5l8 18" stroke="#f58a5a" />
      </Icon>
    ),
  },
  {
    name: '输入助手',
    art: (
      <Icon w={32} h={32}>
        <rect width="32" height="32" rx="4" fill="#5bc0e2" stroke="none" />
        <path d="M23 9c-1-6 4-8 8-5" stroke="#fff" strokeWidth="2.500" />
        <ellipse cx="22" cy="18" rx="9" ry="8" fill="#fff" stroke="none" />
        <path d="M15 22h14l1 10H15zM6 14l3-2 2 4 6 4v6c-6-1-11-5-11-12z" fill="#fff" stroke="none" />
        <path d="M17 18h3M24 18h3M20 21h4" stroke="#4aa8d0" />
        <path d="M6 6h6v6H6z" stroke="#bfe8f5" />
      </Icon>
    ),
  },
  { name: 'QQ', art: <Penguin size={32} /> },
  {
    name: 'Chrome',
    art: (
      <Icon w={30} h={30}>
        <circle cx="15" cy="15" r="15" fill="#4fa353" stroke="none" />
        <path d="M2 7.500A15 15 0 0 1 28 7.500H15L8.500 19z" fill="#d94f43" stroke="none" />
        <path d="M28 7.500A15 15 0 0 1 15 30l6.500-11.500L15 7.500z" fill="#fbcf4a" stroke="none" />
        <circle cx="15" cy="15" r="6" fill="#4a86ee" stroke="#fff" strokeWidth="1.500" />
      </Icon>
    ),
  },
  {
    name: '猎豹浏览器',
    art: (
      <Icon w={32} h={32}>
        <circle cx="16" cy="16" r="16" fill="#ee7a1c" stroke="none" />
        <path d="M29 10C24 3 14 3 9 10l-4 8c3-1 5 0 6 2l4-1 4-1-4 8c6 2 12-1 15-7 1-3 1-6-1-9z" fill="#fbe2c0" stroke="none" />
        <path d="M10 13l4-2M8 18l5-1" stroke="#c65a10" />
      </Icon>
    ),
  },
  {
    name: '记事本',
    frame: 'border-white/40 bg-white/10',
    art: (
      <Icon w={30} h={30}>
        <path d="M25 4l4 22-6 2z" fill="#d9c07a" stroke="none" />
        <path d="M8 4l18-1-4 25-21-4z" fill="#7cc3d8" stroke="none" />
        <path d="M11 5l12-1-3 21-16-3z" fill="#c2e8f2" stroke="none" />
        <path d="M8 4l18-1" stroke="#555" strokeWidth="2" strokeDasharray="1 1" />
      </Icon>
    ),
  },
  {
    name: 'Word',
    frame: 'border-white bg-white/40',
    art: (
      <Icon w={32} h={28}>
        <path d="M8 0h24v7H8z" fill="#41a5ee" stroke="none" />
        <path d="M8 7h24v7H8z" fill="#2b7cd3" stroke="none" />
        <path d="M8 14h24v7H8z" fill="#185abd" stroke="none" />
        <path d="M8 21h24v7H8z" fill="#103f91" stroke="none" />
        <path d="M0 6h17v16H0z" fill="#1a56b0" stroke="none" />
        <path d="M4 10l2 8 2.500-7 2.500 7 2-8" stroke="#fff" strokeWidth="1.800" />
      </Icon>
    ),
  },
];

function TaskBar() {
  return (
    <div className="relative flex h-10 shrink-0 items-stretch bg-[linear-gradient(#b87b8e,#ad6f82_14px,#8b5161_14px,#7d4754)] pl-[15px] text-white">
      {taskItems.map(item => (
        <div key={item.name} className="w-[62px] shrink-0 px-0.5 py-px">
          <button
            type="button"
            aria-label={item.name}
            className={clsx('flex h-full w-full items-center justify-center border', item.frame ?? 'border-transparent')}
          >
            {item.art}
          </button>
        </div>
      ))}
      <div className="mr-[21px] ml-auto flex items-center">
        <span className="flex w-6 justify-center">
          <Icon w={7} h={4}>
            <path d="M0 4h7L3.500 0z" fill="#fff" stroke="none" />
          </Icon>
        </span>
        <span className="flex w-6 justify-center">
          <Penguin size={16} />
        </span>
        <span className="flex w-6 justify-center">
          <Icon w={15} h={16}>
            <path d="M1.500 1v14" strokeWidth="2" />
            <path d="M3 2c3-2 4 1 9 0v6c-5 1-6-1-9 0z" fill="#fff" stroke="none" />
            <circle cx="10.500" cy="11" r="4" fill="#d63434" stroke="none" />
            <path d="M9 9.500l3 3M12 9.500l-3 3" />
          </Icon>
        </span>
        <span className="flex w-6 justify-center">
          <Icon w={15} h={15}>
            <path d="M8.500 3h5v11h-5zM10 1h2" strokeWidth="1.500" />
            <path d="M1.500 1v4M5.500 1v4M3.500 8v6" />
            <path d="M0 4h7v4H0z" fill="#fff" stroke="none" />
          </Icon>
        </span>
        <span className="flex w-6 justify-center">
          <Icon w={14} h={14}>
            <path d="M0 5h3l4-4v12L3 9H0z" fill="#fff" stroke="none" />
            <path d="M9 4.500c1 1 1 4 0 5M11 2.500c2 2.500 2 6.500 0 9" />
          </Icon>
        </span>
        <span className="flex w-6 justify-center">
          <Icon w={15} h={12}>
            <path d="M1 9v3M4 8v4M7 6v6M10 3v9M13.500 0v12" strokeWidth="2" />
          </Icon>
        </span>
        <span className="flex w-7 justify-center text-[13px]">中</span>
        <span className="flex w-7 justify-center">
          <Icon w={16} h={16}>
            <rect x="1" y="1" width="14" height="14" rx="5" fill="#f0521c" stroke="none" />
            <path d="M11.500 4.500C8 3 5 4 5 6s6 2 6 4-3.500 3-6.500 1.500" stroke="#fff" strokeWidth="2" />
          </Icon>
        </span>
        <time className="ml-3 flex w-[62px] flex-col items-center leading-[17px]">
          <span>22:55</span>
          <span>2020/7/14</span>
        </time>
      </div>
    </div>
  );
}

function ActivationNotice() {
  return (
    <div className="pointer-events-none absolute right-14 bottom-[72px] flex w-[286px] gap-7 text-[#aaa]">
      <Icon w={24} h={50}>
        <circle cx="12" cy="12" r="11" fill="#dcdcdc" stroke="#b5b5b5" strokeWidth="2" />
        <path d="M2 12h20a10 10 0 0 1-7 9.500V44l-3 4-3-4V21.500A10 10 0 0 1 2 12z" fill="#b5b5b5" stroke="none" />
      </Icon>
      <div className="whitespace-nowrap">
        <p className="text-xl leading-6">激活 Windows</p>
        <p className="text-[15px] leading-6">转到"电脑设置"以激活 Windows。</p>
      </div>
    </div>
  );
}

function SiteLogo() {
  return (
    <svg
      width="250"
      height="125"
      viewBox="0 0 250 125"
      className="pointer-events-none absolute right-[72px] bottom-[28px] font-['Noto_Sans','Noto_Sans_CJK_SC',sans-serif] drop-shadow-[0_0_1px_rgba(110,110,110,0.7)]"
      aria-label="Baidu经验"
    >
      <g fill="#fff" fillOpacity="0.88" stroke="#d4d4d4" strokeWidth="1">
        <text x="3" y="82" fontSize="52" fontWeight="900">Bai</text>
        <ellipse cx="114" cy="20" rx="9" ry="13" />
        <ellipse cx="136" cy="22" rx="9" ry="12" />
        <ellipse cx="97" cy="37" rx="9" ry="12" />
        <ellipse cx="150" cy="42" rx="9" ry="11" />
        <path d="M124 41c12 0 14 12 24 21 11 10 7 23-7 23-9 0-21-2-29 0-13 1-20-12-10-22 9-9 10-22 22-22z" />
        <text x="158" y="82" fontSize="42" fontWeight="900">经验</text>
      </g>
      <text x="97" y="80" fontSize="38" fontWeight="900" fill="#fff" stroke="#c4c4c4" strokeWidth="1.500">du</text>
      <text x="3" y="115" fontSize="28" fill="#fff" fillOpacity="0.9">jingyan.baidu.com</text>
    </svg>
  );
}

export default function App() {
  return (
    <div className="relative flex h-screen flex-col overflow-hidden bg-[#2b579a] font-['Noto_Sans','Noto_Sans_CJK_SC',sans-serif] text-xs text-[#333]">
      <TitleBar />
      <RibbonTabs />
      <Ribbon />
      <QuickAccess />
      <DocumentTabs />
      <Workspace />
      <StatusBar />
      <TaskBar />
      <ActivationNotice />
      <SiteLogo />
    </div>
  );
}
